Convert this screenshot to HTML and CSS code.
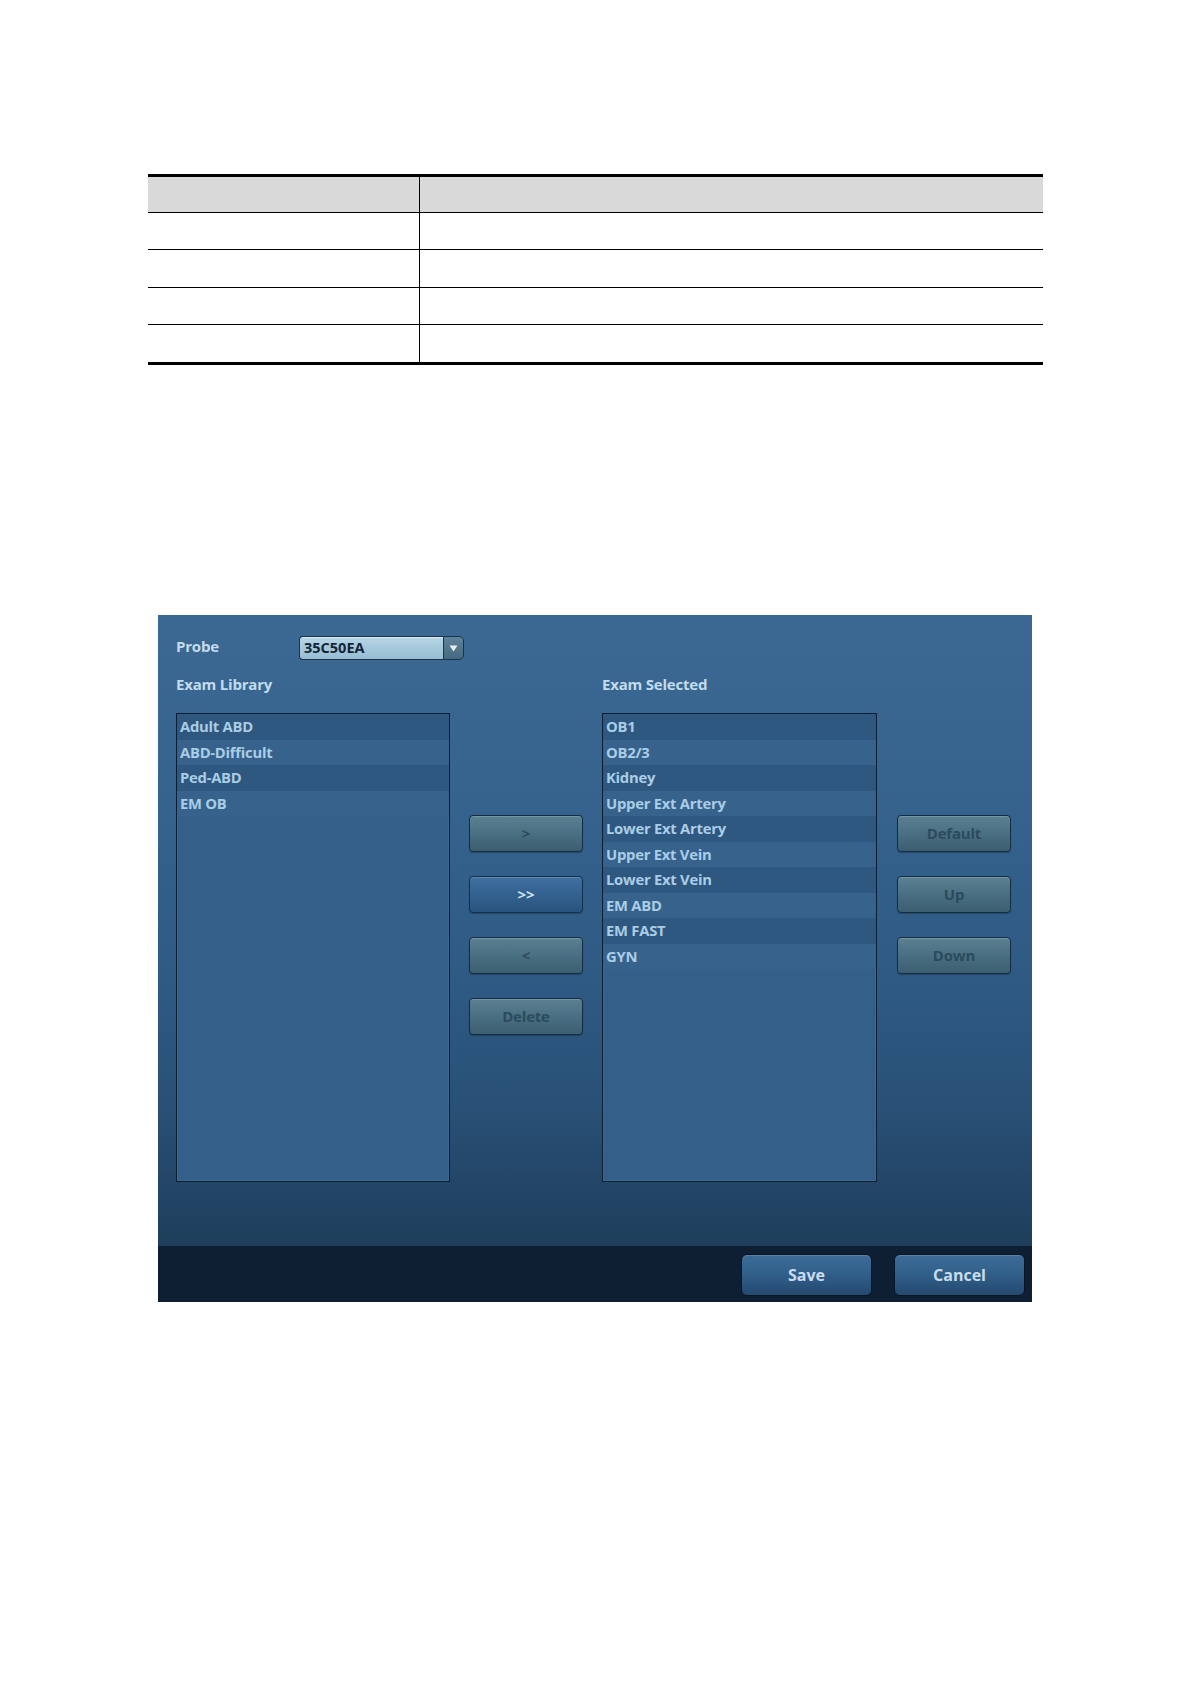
FILE: index.html
```html
<!DOCTYPE html>
<html lang="en">
<head>
<meta charset="utf-8">
<title>Exam Setting</title>
<link rel="stylesheet" href="styles.css">
</head>
<body>
<div class="page">
  <div class="spec">
    <div class="spec-row spec-head"><div class="cell c1"></div><div class="cell c2"></div></div>
    <div class="spec-row"><div class="cell c1"></div><div class="cell c2"></div></div>
    <div class="spec-row tall"><div class="cell c1"></div><div class="cell c2"></div></div>
    <div class="spec-row"><div class="cell c1"></div><div class="cell c2"></div></div>
    <div class="spec-row last"><div class="cell c1"></div><div class="cell c2"></div></div>
  </div>

  <div class="dialog">
    <div class="dialog-main">
      <div class="probe-row">
        <span class="label probe-label">Probe</span>
        <div class="combo">
          <span class="combo-value">35C50EA</span>
          <span class="combo-arrow"><svg width="9" height="7" viewBox="0 0 9 7"><path d="M0.5 0.5 L8.5 0.5 L4.5 6.5 Z" fill="#e8f0f6"/></svg></span>
        </div>
      </div>
      <div class="lists">
        <div class="label list-label">Exam Library</div>
        <div></div>
        <div class="label list-label">Exam Selected</div>
        <div></div>

        <ul class="listbox">
          <li>Adult ABD</li>
          <li>ABD-Difficult</li>
          <li>Ped-ABD</li>
          <li>EM OB</li>
        </ul>
        <div class="btn-col">
          <button class="btn disabled">&gt;</button>
          <button class="btn active">&gt;&gt;</button>
          <button class="btn disabled">&lt;</button>
          <button class="btn disabled">Delete</button>
        </div>
        <ul class="listbox">
          <li>OB1</li>
          <li>OB2/3</li>
          <li>Kidney</li>
          <li>Upper Ext Artery</li>
          <li>Lower Ext Artery</li>
          <li>Upper Ext Vein</li>
          <li>Lower Ext Vein</li>
          <li>EM ABD</li>
          <li>EM FAST</li>
          <li>GYN</li>
        </ul>
        <div class="btn-col">
          <button class="btn disabled">Default</button>
          <button class="btn disabled">Up</button>
          <button class="btn disabled">Down</button>
        </div>
      </div>
    </div>
    <div class="dialog-footer">
      <button class="fbtn save">Save</button>
      <button class="fbtn cancel">Cancel</button>
    </div>
  </div>
</div>
</body>
</html>
```

FILE: styles.css
```css
* { box-sizing: border-box; }

body {
  margin: 0;
  background: #ffffff;
  font-family: "Open Sans", "Noto Sans", "Liberation Sans", sans-serif;
}

.page {
  padding-top: 174px;
}

/* ---------- empty specification table ---------- */
.spec {
  margin-left: 148px;
  width: 895px;
  border-top: 3px solid #000;
  border-bottom: 3px solid #000;
}

.spec-row {
  display: grid;
  grid-template-columns: 272px 1fr;
  height: 37px;
  border-bottom: 1px solid #000;
}

.spec-row.spec-head { height: 36px; }
.spec-row.tall { height: 38px; }
.spec-row.last { border-bottom: none; height: 37px; }

.spec-head .cell { background: #d9d9d9; }

.cell.c1 { border-right: 1px solid #000; }

/* ---------- dialog ---------- */
.dialog {
  margin-top: 250px;
  margin-left: 158px;
  width: 874px;
  height: 687px;
  display: flex;
  flex-direction: column;
}

.dialog-main {
  height: 631px;
  padding: 21px 0 0 18px;
  background: linear-gradient(180deg, #3b6993 0%, #35638d 30%, #2f5b85 55%, #2a5279 75%, #1f3e5c 100%);
}

.label {
  color: #c3dbec;
  font-weight: 700;
  font-size: 15px;
  letter-spacing: -0.2px;
}

.probe-row {
  display: flex;
  align-items: center;
  height: 24px;
}

.probe-label {
  width: 123px;
  padding-bottom: 4px;
}

.combo {
  display: flex;
  height: 24px;
  width: 165px;
}

.combo-value {
  flex: 1;
  display: flex;
  align-items: center;
  padding-left: 4px;
  padding-bottom: 1px;
  font-size: 14.5px;
  font-weight: 700;
  color: #132537;
  background: linear-gradient(180deg, #b9d6e6 0%, #a5c8dc 50%, #98bdd3 100%);
  border: 1px solid #1c3247;
  border-right: none;
  border-radius: 4px 0 0 4px;
  box-shadow: inset 0 1px 1px rgba(255,255,255,0.5);
}

.combo-arrow {
  width: 21px;
  display: flex;
  align-items: center;
  justify-content: center;
  background: linear-gradient(180deg, #5f839a 0%, #45687f 100%);
  border: 1px solid #1c3247;
  border-radius: 0 5px 5px 0;
}

.lists {
  margin-top: 12px;
  display: grid;
  grid-template-columns: 274px 114px 275px 114px;
  grid-template-rows: 24px 469px;
  column-gap: 19px;
  row-gap: 17px;
}

.list-label {
  line-height: 24px;
}

.listbox {
  margin: 0;
  padding: 0;
  list-style: none;
  background: #345f88;
  border: 1px solid #0c1e32;
  box-shadow: inset 0 0 0 1px rgba(90,130,170,0.25);
}

.listbox li {
  height: 25.5px;
  line-height: 24.5px;
  padding-left: 3px;
  color: #aacde6;
  font-weight: 700;
  font-size: 14.8px;
  letter-spacing: -0.25px;
  white-space: nowrap;
}

.listbox li:nth-child(odd) { background: #2f5880; }
.listbox li:nth-child(even) { background: #36628c; }

.btn-col {
  display: flex;
  flex-direction: column;
  gap: 24px;
  padding-top: 102px;
}

.btn-col:last-child { margin-left: 1px; }

.btn {
  height: 37px;
  width: 114px;
  margin: 0;
  padding: 0 0 2px;
  border-radius: 4px;
  font-family: "Open Sans", "Noto Sans", "Liberation Sans", sans-serif;
  font-weight: 700;
  font-size: 15px;
  letter-spacing: -0.2px;
  cursor: default;
}

.btn.disabled {
  color: #2c4a5d;
  background: linear-gradient(180deg, #5b8092 0%, #4a6f82 50%, #3c5e71 100%);
  border: 1px solid #142d43;
  box-shadow: inset 0 1px 0 rgba(255,255,255,0.18), 0 1px 1px rgba(0,0,0,0.25);
}

.btn.active {
  color: #d3e6f4;
  background: linear-gradient(180deg, #3f70a0 0%, #33628f 50%, #29537f 100%);
  border: 1px solid #13304d;
  box-shadow: inset 0 1px 0 rgba(255,255,255,0.18), 0 1px 1px rgba(0,0,0,0.25);
}

/* ---------- footer ---------- */
.dialog-footer {
  flex: 1;
  background: #0f1f33;
  display: flex;
  justify-content: flex-end;
  align-items: flex-start;
  gap: 22px;
  padding: 8px 7px 0 0;
}

.fbtn {
  height: 42px;
  margin: 0;
  padding: 0;
  border: 1px solid #0a1626;
  border-radius: 6px;
  background: linear-gradient(180deg, #3d6c98 0%, #31608b 45%, #25496f 100%);
  box-shadow: inset 0 1px 0 rgba(255,255,255,0.15);
  color: #c9dced;
  font-family: "Open Sans", "Noto Sans", "Liberation Sans", sans-serif;
  font-weight: 700;
  font-size: 16px;
  cursor: default;
}

.fbtn.save { width: 131px; }
.fbtn.cancel { width: 131px; }
```
